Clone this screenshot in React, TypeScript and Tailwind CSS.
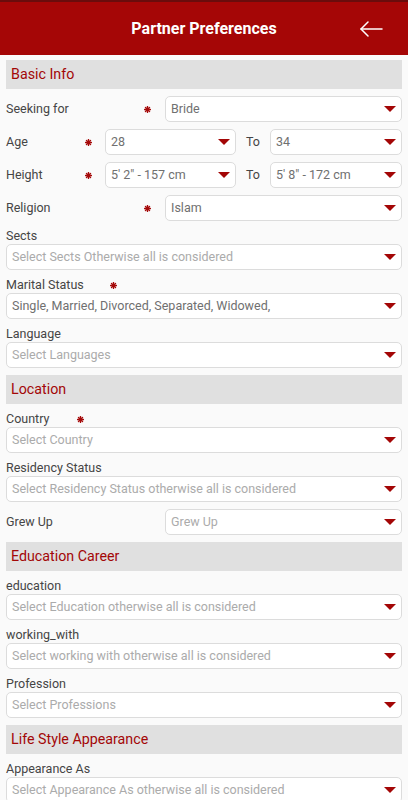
import React from 'react';

const font = { fontFamily: 'Roboto, "Noto Sans", sans-serif' };

function Star() {
    return (
        <svg width="7" height="7" viewBox="0 0 7 7" className="shrink-0">
            <g stroke="#a50a0a" strokeWidth="1.4" strokeLinecap="round">
                <line x1="3.5" y1="0.6" x2="3.5" y2="6.4" />
                <line x1="0.6" y1="3.5" x2="6.4" y2="3.5" />
                <line x1="1.5" y1="1.5" x2="5.5" y2="5.5" />
                <line x1="5.5" y1="1.5" x2="1.5" y2="5.5" />
            </g>
        </svg>
    );
}

function Caret() {
    return (
        <svg width="12" height="6" viewBox="0 0 12 6" className="shrink-0">
            <polygon points="0,0 12,0 6,6" fill="#a30606" />
        </svg>
    );
}

interface SelectProps {
    value: string;
    placeholder?: boolean;
    className?: string;
}

function Select({ value, placeholder, className }: SelectProps) {
    return (
        <div
            className={`flex h-[26px] items-center rounded-[5px] border border-[#dcdcdc] bg-white pl-[5px] pr-[5px] ${className ?? ''}`}
        >
            <span
                className={`flex-1 truncate text-[12.5px] ${placeholder ? 'text-[#ababab]' : 'text-[#707070]'}`}
            >
                {value}
            </span>
            <Caret />
        </div>
    );
}

function Section({ title }: { title: string }) {
    return (
        <div className="flex h-[29px] items-center bg-[#e0e0e0] pl-[5px] text-[14.25px] text-[#a30707]">
            {title}
        </div>
    );
}

function Field({
    label,
    value,
    placeholder,
    starAt,
}: {
    label: string;
    value: string;
    placeholder?: boolean;
    starAt?: number;
}) {
    return (
        <div className="flex flex-col">
            <div className="flex h-[16px] items-center text-[12.5px] text-[#454545]">
                <span style={starAt ? { width: starAt } : undefined}>
                    {label}
                </span>
                {starAt ? <Star /> : null}
            </div>
            <Select value={value} placeholder={placeholder} />
        </div>
    );
}

function WideRow({
    label,
    value,
    star,
    placeholder,
}: {
    label: string;
    value: string;
    star?: boolean;
    placeholder?: boolean;
}) {
    return (
        <div className="flex items-center">
            <span className="w-[138px] text-[12.5px] text-[#454545]">{label}</span>
            <span className="flex w-[21px] items-center">{star && <Star />}</span>
            <Select value={value} placeholder={placeholder} className="flex-1" />
        </div>
    );
}

function RangeRow({
    label,
    from,
    to,
}: {
    label: string;
    from: string;
    to: string;
}) {
    return (
        <div className="flex items-center">
            <span className="w-[79px] text-[12.5px] text-[#454545]">{label}</span>
            <span className="flex w-[20px] items-center">
                <Star />
            </span>
            <Select value={from} className="w-[131px]" />
            <span className="w-[34px] pl-[10px] text-[12.5px] text-[#454545]">
                To
            </span>
            <Select value={to} className="flex-1" />
        </div>
    );
}

export default function App() {
    return (
        <div className="h-[800px] overflow-hidden bg-[#fafafa]" style={font}>
            <header className="relative flex h-[55px] items-center justify-center border-t-2 border-[#6a0c0c] bg-[#a50606]">
                <h1 className="text-[16px] font-bold text-white">
                    Partner Preferences
                </h1>
                <svg
                    width="24"
                    height="16"
                    viewBox="0 0 24 16"
                    className="absolute right-[24px] top-[19px]"
                >
                    <g
                        stroke="white"
                        strokeWidth="1.5"
                        fill="none"
                        strokeLinecap="round"
                        strokeLinejoin="round"
                    >
                        <line x1="1" y1="8" x2="22" y2="8" />
                        <polyline points="8,1 1,8 8,15" />
                    </g>
                </svg>
            </header>

            <main className="mt-[5px] flex flex-col gap-[7px] px-[6px]">
                <Section title="Basic Info" />
                <WideRow label="Seeking for" value="Bride" star />
                <RangeRow label="Age" from="28" to="34" />
                <RangeRow
                    label="Height"
                    from={'5\' 2" - 157 cm'}
                    to={'5\' 8" - 172 cm'}
                />
                <WideRow label="Religion" value="Islam" star />
                <Field
                    label="Sects"
                    value="Select Sects Otherwise all is considered"
                    placeholder
                />
                <Field
                    label="Marital Status"
                    value="Single, Married, Divorced, Separated, Widowed,"
                    starAt={104}
                />
                <Field label="Language" value="Select Languages" placeholder />

                <Section title="Location" />
                <Field
                    label="Country"
                    value="Select Country"
                    placeholder
                    starAt={71}
                />
                <Field
                    label="Residency Status"
                    value="Select Residency Status otherwise all is considered"
                    placeholder
                />
                <WideRow label="Grew Up" value="Grew Up" placeholder />

                <Section title="Education Career" />
                <Field
                    label="education"
                    value="Select Education otherwise all is considered"
                    placeholder
                />
                <Field
                    label="working_with"
                    value="Select working with otherwise all is considered"
                    placeholder
                />
                <Field
                    label="Profession"
                    value="Select Professions"
                    placeholder
                />

                <Section title="Life Style Appearance" />
                <Field
                    label="Appearance As"
                    value="Select Appearance As otherwise all is considered"
                    placeholder
                />
            </main>
        </div>
    );
}
